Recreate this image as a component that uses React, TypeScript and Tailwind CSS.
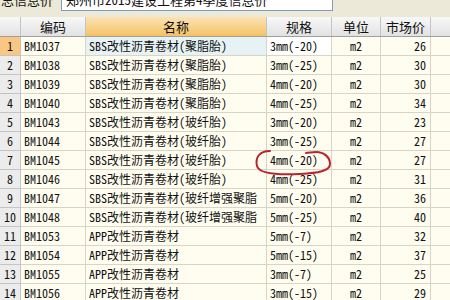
import React from "react";

const rows: [string, string, string, string, string][] = [
  ["BM1037", "SBS改性沥青卷材(聚脂胎)", "3mm(-20)", "m2", "26"],
  ["BM1038", "SBS改性沥青卷材(聚脂胎)", "3mm(-25)", "m2", "30"],
  ["BM1039", "SBS改性沥青卷材(聚脂胎)", "4mm(-20)", "m2", "30"],
  ["BM1040", "SBS改性沥青卷材(聚脂胎)", "4mm(-25)", "m2", "34"],
  ["BM1043", "SBS改性沥青卷材(玻纤胎)", "3mm(-20)", "m2", "23"],
  ["BM1044", "SBS改性沥青卷材(玻纤胎)", "3mm(-25)", "m2", "27"],
  ["BM1045", "SBS改性沥青卷材(玻纤胎)", "4mm(-20)", "m2", "27"],
  ["BM1046", "SBS改性沥青卷材(玻纤胎)", "4mm(-25)", "m2", "31"],
  ["BM1047", "SBS改性沥青卷材(玻纤增强聚脂", "5mm(-20)", "m2", "36"],
  ["BM1048", "SBS改性沥青卷材(玻纤增强聚脂", "5mm(-25)", "m2", "40"],
  ["BM1053", "APP改性沥青卷材", "5mm(-7)", "m2", "32"],
  ["BM1054", "APP改性沥青卷材", "5mm(-15)", "m2", "37"],
  ["BM1055", "APP改性沥青卷材", "3mm(-7)", "m2", "25"],
  ["BM1056", "APP改性沥青卷材", "3mm(-15)", "m2", "29"],
];

const font = {
  fontFamily:
    '"Noto Sans Mono CJK SC", "Noto Sans CJK SC", "Liberation Mono", monospace',
};

export default function App() {
  return (
    <div
      className="relative w-[450px] h-[300px] overflow-hidden bg-[#f0f0f0] text-[12px] text-[#111]"
      style={font}
    >
      {/* top strip (cut off) */}
      <div className="h-[12px] overflow-hidden flex flex-col justify-end bg-[#ece9d8]">
        <div className="h-[24px] shrink-0 flex items-center gap-[6px]">
          <span className="pl-[1px] text-[13px]">总信息价</span>
          <div className="h-[22px] w-[272px] ml-[2px] border border-[#7f9db9] bg-white flex items-center px-[4px] text-[13px]">
            郑州市2015建设工程第4季度信息价
          </div>
        </div>
      </div>
      <div className="h-[5px] bg-[#ece9d8]" />

      {/* header */}
      <div className="flex h-[20px] border-b border-[#a0a0a0]">
        <div className="w-[21px] shrink-0 border-r border-[#c4c4c4] bg-gradient-to-b from-[#f8f8f8] to-[#e2e2e2]" />
        <div className="w-[65px] shrink-0 border-r border-[#c4c4c4] bg-gradient-to-b from-[#f8f8f8] to-[#e2e2e2] flex items-center justify-center text-[13px]">
          编码
        </div>
        <div className="w-[181px] shrink-0 border-r border-[#c4c4c4] bg-gradient-to-b from-[#fbe3b4] to-[#f5c262] flex items-center justify-center text-[13px]">
          名称
        </div>
        <div className="w-[65px] shrink-0 border-r border-[#c4c4c4] bg-gradient-to-b from-[#f8f8f8] to-[#e2e2e2] flex items-center justify-center text-[13px]">
          规格
        </div>
        <div className="w-[49px] shrink-0 border-r border-[#c4c4c4] bg-gradient-to-b from-[#f8f8f8] to-[#e2e2e2] flex items-center justify-center text-[13px]">
          单位
        </div>
        <div className="w-[50px] shrink-0 border-r border-[#c4c4c4] bg-gradient-to-b from-[#f8f8f8] to-[#e2e2e2] flex items-center justify-center text-[13px]">
          市场价
        </div>
        <div className="flex-1 bg-gradient-to-b from-[#f8f8f8] to-[#e2e2e2]" />
      </div>

      {/* rows */}
      {rows.map((r, i) => {
        const sel = i === 0;
        return (
          <div key={i} className="flex h-[19px]">
            <div
              className={
                "w-[21px] shrink-0 border-r border-b border-[#c4c4c4] flex items-center justify-center " +
                (sel ? "bg-[#f8c882]" : "bg-[#ececec]")
              }
            >
              {i + 1}
            </div>
            <div className="w-[65px] shrink-0 border-r border-b border-[#d8d5c4] bg-[#fffdf0] flex items-center pl-[3px] whitespace-nowrap overflow-hidden">
              {r[0]}
            </div>
            <div
              className={
                "w-[181px] shrink-0 border-r border-b border-[#d8d5c4] flex items-center pl-[3px] whitespace-nowrap overflow-hidden " +
                (sel ? "bg-[#e6f2f4]" : "bg-[#fffdf0]")
              }
            >
              {r[1]}
            </div>
            <div
              className={
                "w-[65px] shrink-0 border-r border-b border-[#d8d5c4] flex items-center pl-[3px] whitespace-nowrap overflow-hidden " +
                (sel ? "bg-white" : "bg-[#fffdf0]")
              }
            >
              {r[2]}
            </div>
            <div className="w-[49px] shrink-0 border-r border-b border-[#d8d5c4] bg-[#fffdf0] flex items-center justify-center">
              {r[3]}
            </div>
            <div className="w-[50px] shrink-0 border-r border-b border-[#d8d5c4] bg-[#fffdf0] flex items-center justify-end pr-[4px]">
              {r[4]}
            </div>
            <div className="flex-1 border-b border-[#d8d5c4] bg-[#fffdf0]" />
          </div>
        );
      })}

      {/* red hand-drawn circle annotation */}
      <svg
        className="absolute left-0 top-0 pointer-events-none"
        width="450"
        height="300"
        viewBox="0 0 450 300"
      >
        <path
          d="M270 151 C 259 151, 255 158, 257 166 C 259 174, 280 175, 300 174 C 318 173, 330 171, 330 164 C 330 157, 324 152, 316 152 C 312 152, 309 153, 306 153"
          fill="none"
          stroke="#b8232c"
          strokeWidth="2"
          strokeLinecap="round"
        />
      </svg>
    </div>
  );
}
